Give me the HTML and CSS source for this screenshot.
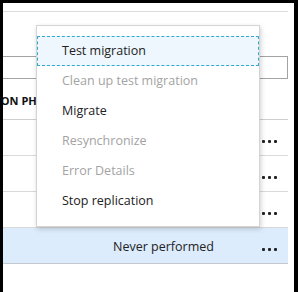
FILE: index.html
```html
<!DOCTYPE html>
<html lang="en">
<head>
  <meta charset="UTF-8">
  <title>Replicating machines</title>
  <link rel="stylesheet" href="styles.css">
</head>
<body>

  <div class="frame">
    <div class="topline"></div>
    <div class="search-box"></div>

    <div class="grid">
      <div class="row head">
        <div class="cell phase">MIGRATION PHASE</div>
      </div>
      <div class="row">
        <div class="cell phase"></div>
        <div class="cell status"></div>
        <div class="cell more"><span></span><span></span><span></span></div>
      </div>
      <div class="row">
        <div class="cell phase"></div>
        <div class="cell status"></div>
        <div class="cell more"><span></span><span></span><span></span></div>
      </div>
      <div class="row">
        <div class="cell phase"></div>
        <div class="cell status"></div>
        <div class="cell more"><span></span><span></span><span></span></div>
      </div>
      <div class="row selected">
        <div class="cell phase"></div>
        <div class="cell status">Never performed</div>
        <div class="cell more"><span></span><span></span><span></span></div>
      </div>
    </div>

    <!-- context menu for the selected machine -->
    <ul class="menu">
      <li class="focused">Test migration</li>
      <li class="disabled">Clean up test migration</li>
      <li>Migrate</li>
      <li class="disabled">Resynchronize</li>
      <li class="disabled">Error Details</li>
      <li>Stop replication</li>
    </ul>
  </div>

</body>
</html>
```

FILE: styles.css
```css
body {
  margin: 0;
  background-color: #000;
  padding: 3px 4px 4px 3px;
  font-family: 'Open Sans', sans-serif;
  color: #222;
}
.frame {
  position: relative;
  height: 285px;
  background-color: #fff;
  padding: 8px 6px 0 0;
  overflow: hidden;
}
.topline {
  border-top: 1px solid #dcdcdc;
}
.search-box {
  box-sizing: border-box;
  height: 23px;
  margin-top: 44px;
  margin-left: -4px;
  border: 1px solid #a3a3a3;
}
.row {
  display: flex;
  align-items: center;
  box-sizing: border-box;
  height: 36px;
  border-bottom: 1px solid #d9d9d9;
}
.row.head {
  height: 41px;
  border-bottom-color: #cfcfcf;
}
.row.selected {
  background-color: #dcecfc;
  border-bottom-color: #c4c9cf;
}
.cell.phase {
  width: 110px;
  flex-shrink: 0;
}
.head .phase {
  margin-left: -49px;
  width: 200px;
  font-size: 11px;
  font-weight: bold;
  color: #111;
  white-space: nowrap;
  padding-top: 2px;
}
.cell.status {
  flex: 1;
  font-size: 12.5px;
  color: #222;
  padding-top: 1px;
}
.cell.more {
  display: flex;
  gap: 3px;
  margin-right: 11px;
  padding-top: 8px;
}
.more span {
  width: 3px;
  height: 3px;
  border-radius: 1px;
  background-color: #222;
}
.menu {
  position: absolute;
  left: 33px;
  top: 22px;
  width: 222px;
  margin: 0;
  padding: 10px 0;
  list-style: none;
  background-color: #fff;
  border: 1px solid #d4d4d4;
  box-shadow: 1px 2px 5px rgba(0, 0, 0, 0.18);
}
.menu li {
  box-sizing: border-box;
  height: 30px;
  line-height: 28px;
  padding-left: 24px;
  border: 1px solid transparent;
  font-size: 12.5px;
  color: #222;
}
.menu li.focused {
  background-color: #eef6fe;
  border: 1px dashed #2fa9cf;
}
.menu li.disabled {
  color: #a3a3a3;
}
```
